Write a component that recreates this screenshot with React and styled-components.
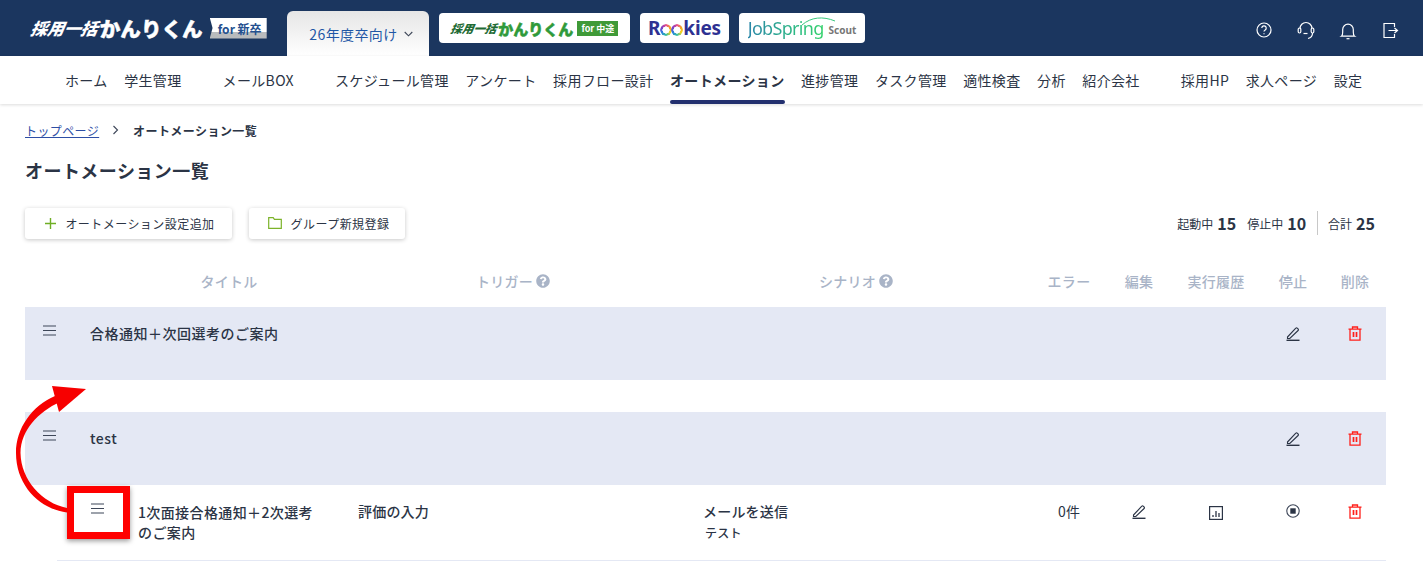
import React from "react";
import styled, { createGlobalStyle } from "styled-components";
import { FaQuestionCircle } from "react-icons/fa";

const Global = createGlobalStyle`
  html, body { margin: 0; padding: 0; height: 567px; overflow: hidden; background: #fff; }
  body { font-family: "Noto Sans CJK JP", "Noto Sans", sans-serif; color: #2b3445; }
  * { box-sizing: border-box; }
`;

const Page = styled.div`position: relative; width: 1423px; height: 567px; overflow: hidden;`;

const Header = styled.header`
  height: 56px; background: #1b365f; display: flex; align-items: center; padding: 0 22px 0 31px;
`;
const Logo = styled.div`
  display: flex; align-items: center; width: 256px; flex: none; white-space: nowrap; color: #fff;
`;
const LogoSmall = styled.span`
  font-size: ${p => p.$s}px; font-weight: 900; font-style: italic; display: inline-block;
  transform: skewX(-10deg); letter-spacing: -0.1px; color: ${p => p.$c || "inherit"};
`;
const LogoBig = styled.span`
  font-size: ${p => p.$s}px; font-weight: 900; margin-left: 2px; color: ${p => p.$c || "inherit"};
  -webkit-text-stroke: .5px currentColor;
`;
const LogoBadge = styled.span`
  display: inline-flex; align-items: center; justify-content: center; margin-left: 7px; flex: none;
  width: 57px; height: 21px; font-size: 12px; font-weight: 700; color: #24508f; padding-left: 3px;
  background: linear-gradient(#fff 0, #fff 66%, #b9bbbd 66%, #b9bbbd 100%);
  clip-path: polygon(0 0, 100% 0, 100% 100%, 0 100%, 5% 50%);
`;
const GreenBadge = styled.span`
  display: inline-flex; align-items: center; justify-content: center; margin-left: 4px; flex: none;
  width: 41px; height: 15px; font-size: 9px; font-weight: 700; color: #fff; background: #3f9a38;
`;
const YearTab = styled.button`
  align-self: flex-end; width: 142px; height: 45px; border: 0; border-radius: 6px 6px 0 0; flex: none;
  background: linear-gradient(#e6e6e6, #fff); color: #1f57a6; font: 400 14px "Noto Sans CJK JP", sans-serif; letter-spacing: .4px;
  display: flex; align-items: center; justify-content: center; gap: 6px; padding: 1px 0 0 6px; margin-right: 10px;
`;
const BrandButton = styled.div`
  width: ${p => p.$w}px; height: 30px; background: #fff; border-radius: 4px; margin-right: 10px; flex: none;
  display: flex; align-items: center; justify-content: center; white-space: nowrap; position: relative;
`;
const Rookies = styled.span`
  font: 700 19px "Noto Sans", sans-serif; color: #2e3192; display: flex; align-items: center; letter-spacing: -0.2px;
`;
const Ring = styled.i`
  display: inline-block; width: 12px; height: 12px; border-radius: 50%; margin: 3px 0 0 ${p => p.$ml || 0}px;
  background: conic-gradient(#e84a8a, #f5a623, #f5d523, #2fc1a0, #2d7fe0, #7a3fc8, #e84a8a);
  -webkit-mask: radial-gradient(circle, transparent 3.4px, #000 3.8px);
  mask: radial-gradient(circle, transparent 3.4px, #000 3.8px);
`;
const JobSpring = styled.span`
  font: 400 18px "Noto Sans", sans-serif; letter-spacing: -0.7px;
  background: linear-gradient(90deg, #2a86a8, #2cbf7f 70%, #34d26a); -webkit-background-clip: text; background-clip: text; color: transparent;
`;
const Scout = styled.span`font: 700 10px "Noto Sans", sans-serif; color: #777; margin: 3px 0 0 5px;`;
const Swoosh = styled.svg`position: absolute; left: 62px; top: 3px;`;
const HeaderIcons = styled.div`margin-left: auto; display: flex; gap: 20px; align-items: center; padding-top: 3px;`;

const Nav = styled.nav`
  height: 48px; background: #fff; box-shadow: 0 1px 3px rgba(0,0,0,.14); display: flex; padding-left: 65px; position: relative;
`;
const NavItem = styled.a`
  font-size: 14px; letter-spacing: .35px; line-height: 20px; padding-top: 14px; height: 48px; white-space: nowrap; color: #2b3445; position: relative;
  margin-left: ${p => p.$first ? 0 : p.$far ? 41 : 16.5}px; font-weight: ${p => p.$active ? 700 : 400};
  ${p => p.$active && `&::after { content: ""; position: absolute; left: 0; right: 0; bottom: 0; height: 4px; border-radius: 2px; background: #23306f; }`}
`;

const Main = styled.main`padding: 0 37px 0 25px;`;
const Crumbs = styled.div`display: flex; align-items: center; font-size: 12px; height: 18px; margin-top: 17px;`;
const CrumbLink = styled.a`color: #2d4ea5; text-decoration: underline; width: 74px; white-space: nowrap; letter-spacing: .4px;`;
const CrumbSep = styled.svg`margin: 0 13px 0 13px;`;
const CrumbNow = styled.span`font-weight: 700; letter-spacing: .45px;`;
const Title = styled.h1`margin: 18px 0 0; font-size: 18px; line-height: 26px; font-weight: 700; letter-spacing: .45px;`;
const Toolbar = styled.div`display: flex; align-items: center; margin-top: 24px; height: 32px;`;
const ActionButton = styled.button`
  width: ${p => p.$w}px; height: 31px; margin-right: 17px; background: #fff; border: 0; border-radius: 3px; display: flex; align-items: center; justify-content: center; gap: 9px;
  box-shadow: 0 1px 4px rgba(0,0,0,.22); font: 400 12px "Noto Sans CJK JP", sans-serif; color: #2b3445; letter-spacing: .45px; padding: 0 0 0 3px;
`;
const Stats = styled.div`margin-left: auto; display: flex; align-items: center; padding-right: 11px; font-size: 12px;`;
const Stat = styled.span`display: flex; align-items: center; gap: 4px; margin-left: ${p => p.$ml || 0}px;`;
const StatNum = styled.b`font-size: 16px; font-weight: 700;`;
const StatDivider = styled.span`width: 1px; height: 24px; background: #c8c8c8; margin: 0 10px 0 11px;`;

const cols = "74px 66px 88px 66px 58px";
const HeadRow = styled.div`
  display: grid; grid-template-columns: 234px 334px 352px ${cols}; padding-left: 87px; margin-top: 17px; height: 51px; padding-bottom: 1px;
  align-items: center; color: #a9b4c7; font-size: 14px; font-weight: 500; text-align: center;
`;
const HeadCell = styled.div`display: flex; align-items: center; justify-content: center; gap: 3px; letter-spacing: .3px;`;

const GroupRow = styled.div`
  display: grid; grid-template-columns: 65px 1fr 66px 58px; height: 73px; background: #e4e8f4; margin-top: ${p => p.$mt || 0}px; padding-right: 2px;
`;
const DragCell = styled.div`display: flex; padding: 18px 0 0 18px;`;
const GroupName = styled.div`font-size: 14px; font-weight: 500; padding-top: 16px; letter-spacing: .5px;`;
const IconCell = styled.div`display: flex; justify-content: center; padding-top: ${p => p.$pt ?? 19}px;`;

const ChildRow = styled.div`
  display: grid; grid-template-columns: 81px 220px 345px 329px ${cols}; margin-left: 32px; height: 76px; border-bottom: 1px solid #e4e8f4; padding-right: 2px;
`;
const ChildDrag = styled.div``;
const ChildTitle = styled.div`font-size: 14px; font-weight: 500; line-height: 20px; padding-top: 17px; width: 182px; letter-spacing: .38px;`;
const ChildText = styled.div`font-size: 14px; font-weight: ${p => p.$w || 400}; padding-top: 16px; line-height: 20px; letter-spacing: .2px; text-align: ${p => p.$center ? "center" : "left"};`;
const SubText = styled.div`font-size: 12px; line-height: 18px; margin: 3px 0 0 2px;`;

const RedBox = styled.div`
  position: absolute; left: 67px; top: 486px; width: 63px; height: 53px; border: 7px solid #f00; box-shadow: 0 2px 5px rgba(0,0,0,.4);
  display: flex; justify-content: center; align-items: flex-start; padding: 10px 2px 0 0;
`;
const ArrowSvg = styled.svg`position: absolute; left: 0; top: 370px;`;

const Burger = () => (
  <svg width="13" height="11" viewBox="0 0 13 11" stroke="#3d4658" strokeWidth="1.2"><path d="M0 1h13M0 5.500h13M0 10h13" /></svg>
);
const Pencil = () => (
  <svg width="14" height="15" viewBox="0 0 14 15" fill="none" stroke="#2b3445" strokeWidth="1.1"><path d="M1.500 11 9.800 2.200a1 1 0 0 1 1.500 0l.8.800a1 1 0 0 1 0 1.500L3.800 12.500H1.500z" /><path d="M.5 14.300h13" strokeWidth="1.400" /></svg>
);
const Trash = () => (
  <svg width="14" height="15" viewBox="0 0 14 15" fill="none" stroke="#ff1f1a" strokeWidth="1.300"><path d="M.5 3.200h13M4.500 3V1h5v2M2 3.200v11h10v-11" /><path d="M5.500 6v5M8.500 6v5" strokeWidth="1.700" /></svg>
);
const Chart = () => (
  <svg width="14" height="14" viewBox="0 0 14 14" fill="none" stroke="#2b3445" strokeWidth="1.200"><rect x=".6" y=".6" width="12.800" height="12.800" /><path d="M4 11V9M7 11V5M10 11V7" strokeWidth="1.300" /></svg>
);
const Stop = () => (
  <svg width="14" height="14" viewBox="0 0 14 14" fill="none"><circle cx="7" cy="7" r="6.200" stroke="#3d4658" strokeWidth="1.100" /><rect x="4.300" y="4.300" width="5.400" height="5.400" fill="#2b3445" /></svg>
);

export default function App() {
  const nav = [
    ["ホーム"], ["学生管理"], ["メールBOX", 1], ["スケジュール管理", 1], ["アンケート"], ["採用フロー設計"],
    ["オートメーション", 0, 1], ["進捗管理"], ["タスク管理"], ["適性検査"], ["分析"], ["紹介会社"], ["採用HP", 1], ["求人ページ"], ["設定"],
  ];
  return (
    <Page>
      <Global />
      <Header>
        <Logo>
          <LogoSmall $s={16.8}>採用一括</LogoSmall>
          <LogoBig $s={20.6}>かんりくん</LogoBig>
          <LogoBadge>for 新卒</LogoBadge>
        </Logo>
        <YearTab>
          26年度卒向け
          <svg width="9" height="6" viewBox="0 0 9 6" fill="none" stroke="#3d4658" strokeWidth="1.100"><path d="M.7 1 4.500 4.800 8.300 1" /></svg>
        </YearTab>
        <BrandButton $w={191}>
          <LogoSmall $s={11.5} $c="#1f6b35">採用一括</LogoSmall>
          <LogoBig $s={15} $c="#2f9a3a">かんりくん</LogoBig>
          <GreenBadge>for 中途</GreenBadge>
        </BrandButton>
        <BrandButton $w={89}>
          <Rookies>R<Ring /><Ring $ml={-1} />kies</Rookies>
        </BrandButton>
        <BrandButton $w={126}>
          <Swoosh width="36" height="10" viewBox="0 0 36 10" fill="none" stroke="#38c77c" strokeWidth="1"><path d="M1 9C10 1 22 0 34 5" /></Swoosh>
          <JobSpring>JobSpring</JobSpring>
          <Scout>Scout</Scout>
        </BrandButton>
        <HeaderIcons>
          <svg width="22" height="22" viewBox="0 0 22 22" fill="none" stroke="#fff" strokeWidth="1.200"><circle cx="11" cy="11" r="7" /><path d="M8.800 9a2.200 2.200 0 1 1 3.400 1.900c-.8.500-1.200.9-1.200 1.700" /><path d="M11 14.200v1" /></svg>
          <svg width="22" height="22" viewBox="0 0 22 22" fill="none" stroke="#fff" strokeWidth="1.200"><path d="M5 9.500a6 6 0 0 1 12 0" /><rect x="3.200" y="9" width="2.600" height="5" rx="1.200" /><rect x="16.200" y="9" width="2.600" height="5" rx="1.200" /><path d="M17.500 14a5.500 5.500 0 0 1-4.500 5.500" /><path d="M8.500 14.500h4" /></svg>
          <svg width="22" height="22" viewBox="0 0 22 22" fill="none" stroke="#fff" strokeWidth="1.200"><path d="M4.500 17.200c1-.6 1.200-2 1.200-4.200v-2.500a5.300 5.300 0 0 1 10.600 0V13c0 2.200.2 3.600 1.200 4.200z" /><path d="M9.500 19.700h3" /></svg>
          <svg width="22" height="22" viewBox="0 0 22 22" fill="none" stroke="#fff" strokeWidth="1.200"><path d="M15.500 8V4.500H5v14h10.500V15" /><path d="M9.500 11.500h9M15.500 9l3 2.500-3 2.500" /></svg>
        </HeaderIcons>
      </Header>
      <Nav>
        {nav.map(([t, far, active], i) => (
          <NavItem key={t} $first={i === 0} $far={far} $active={active}>{t}</NavItem>
        ))}
      </Nav>
      <Main>
        <Crumbs>
          <CrumbLink>トップページ</CrumbLink>
          <CrumbSep width="8" height="10" viewBox="0 0 8 10" fill="none" stroke="#3d4658" strokeWidth="1.100"><path d="M1.500 1 5.500 5 1.500 9" /></CrumbSep>
          <CrumbNow>オートメーション一覧</CrumbNow>
        </Crumbs>
        <Title>オートメーション一覧</Title>
        <Toolbar>
          <ActionButton $w={207}>
            <svg width="11" height="11" viewBox="0 0 11 11" stroke="#6fae25" strokeWidth="1.400"><path d="M5.500 0v11M0 5.500h11" /></svg>
            オートメーション設定追加
          </ActionButton>
          <ActionButton $w={156}>
            <svg width="14" height="12" viewBox="0 0 14 12" fill="none" stroke="#7cb32a" strokeWidth="1.200"><path d="M.7.700h4.500l1.200 1.600h6.900v9H.7z" /></svg>
            グループ新規登録
          </ActionButton>
          <Stats>
            <Stat>起動中 <StatNum>15</StatNum></Stat>
            <Stat $ml={11}>停止中 <StatNum>10</StatNum></Stat>
            <StatDivider />
            <Stat>合計 <StatNum>25</StatNum></Stat>
          </Stats>
        </Toolbar>
        <HeadRow>
          <HeadCell>タイトル</HeadCell>
          <HeadCell>トリガー <FaQuestionCircle size={14} /></HeadCell>
          <HeadCell>シナリオ <FaQuestionCircle size={14} /></HeadCell>
          <HeadCell>エラー</HeadCell>
          <HeadCell>編集</HeadCell>
          <HeadCell>実行履歴</HeadCell>
          <HeadCell>停止</HeadCell>
          <HeadCell>削除</HeadCell>
        </HeadRow>
        <GroupRow>
          <DragCell><Burger /></DragCell>
          <GroupName>合格通知＋次回選考のご案内</GroupName>
          <IconCell><Pencil /></IconCell>
          <IconCell><Trash /></IconCell>
        </GroupRow>
        <GroupRow $mt={32}>
          <DragCell><Burger /></DragCell>
          <GroupName>test</GroupName>
          <IconCell><Pencil /></IconCell>
          <IconCell><Trash /></IconCell>
        </GroupRow>
        <ChildRow>
          <ChildDrag />
          <ChildTitle>1次面接合格通知＋2次選考のご案内</ChildTitle>
          <ChildText $w={500}>評価の入力</ChildText>
          <ChildText $w={500}>メールを送信<SubText>テスト</SubText></ChildText>
          <ChildText $center>0件</ChildText>
          <IconCell><Pencil /></IconCell>
          <IconCell $pt={21}><Chart /></IconCell>
          <IconCell $pt={19}><Stop /></IconCell>
          <IconCell><Trash /></IconCell>
        </ChildRow>
      </Main>
      <RedBox><Burger /></RedBox>
      <ArrowSvg width="100" height="150" viewBox="0 370 100 150" fill="#f70000">
        <path d="M67 512.500C40 509 16 486 16 453C16 428 32 406 55 396L60 402C38 412 21 430 20.500 453C21 480 42 503 67 508Z" />
        <path d="M52 386 86 389 59 412Z" />
      </ArrowSvg>
    </Page>
  );
}
